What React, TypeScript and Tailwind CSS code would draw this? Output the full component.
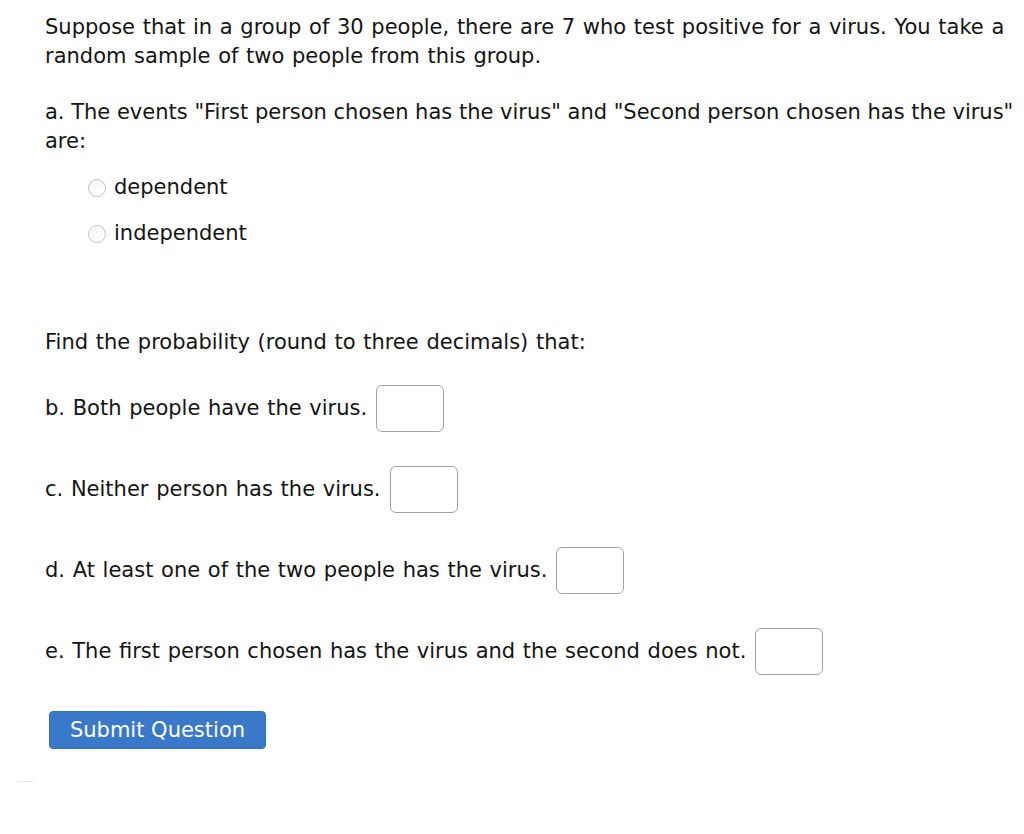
export default function App() {
  const font = { fontFamily: '"DejaVu Sans", Verdana, sans-serif' }
  const answerBox = 'inline-block w-[68px] h-[47px] border border-[#a3a3a3] rounded-[6px] bg-white align-middle'
  return (
    <div className="min-h-[834px] bg-white text-[#141414] text-[21px] leading-[29px] pl-[45px] pt-[13px] [word-spacing:1px]" style={font}>
      <p className="whitespace-nowrap">
        Suppose that in a group of 30 people, there are 7 who test positive for a virus. You take a
        <br />
        random sample of two people from this group.
      </p>

      <p className="mt-[27px] whitespace-nowrap [word-spacing:0px]">
        a. The events "First person chosen has the virus" and "Second person chosen has the virus"
        <br />
        are:
      </p>

      <div className="mt-[17px] ml-[43px] flex flex-col gap-[17px]">
        {['dependent', 'independent'].map(opt => (
          <label key={opt} className="flex items-center gap-[8px]">
            <span className="w-[18px] h-[18px] rounded-full border border-[#c4c4c4] bg-gradient-to-b from-[#f6f6f6] to-white" />
            <span>{opt}</span>
          </label>
        ))}
      </div>

      <p className="mt-[80px]">Find the probability (round to three decimals) that:</p>

      <div className="mt-[28px] flex flex-col gap-[34px]">
        <div className="flex items-center gap-[9px]">
          <span>b. Both people have the virus.</span>
          <span className={answerBox} />
        </div>
        <div className="flex items-center gap-[9px]">
          <span>c. Neither person has the virus.</span>
          <span className={answerBox} />
        </div>
        <div className="flex items-center gap-[9px]">
          <span>d. At least one of the two people has the virus.</span>
          <span className={answerBox} />
        </div>
        <div className="flex items-center gap-[9px]">
          <span>e. The first person chosen has the virus and the second does not.</span>
          <span className={answerBox} />
        </div>
      </div>

      <button
        type="button"
        className="mt-[36px] ml-[4px] w-[217px] h-[38px] rounded-[4px] bg-[#3a78c9] border border-[#3370bf] text-white text-[21px]"
      >
        Submit Question
      </button>

      <div className="mt-[32px] -ml-[27px] w-[15px] h-px bg-[#e2e2e2]" />
    </div>
  )
}
